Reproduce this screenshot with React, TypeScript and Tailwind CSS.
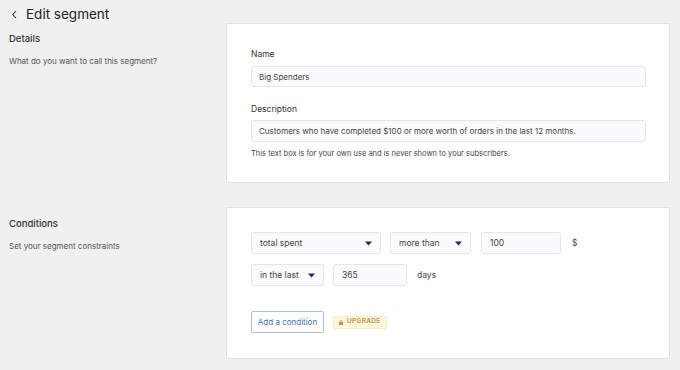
import React from "react";

const Arrow = () => (
  <svg width="7" height="5" viewBox="0 0 7 5" className="shrink-0">
    <path d="M0 0.5h7L3.5 4.5z" fill="#1f2a5c" />
  </svg>
);

const Select = ({ label, width }: { label: string; width: string }) => (
  <div
    className={`${width} h-[22px] flex items-center justify-between pl-[8px] pr-[8px] bg-[#fbfbfd] border border-[#e4e6ea] rounded-[3px] text-[8.5px] text-[#444]`}
  >
    <span>{label}</span>
    <Arrow />
  </div>
);

const Field = ({ value, width }: { value: string; width: string }) => (
  <div
    className={`${width} h-[22px] flex items-center px-[8px] bg-[#fbfbfd] border border-[#e4e6ea] rounded-[3px] text-[8.5px] text-[#444]`}
  >
    {value}
  </div>
);

export default function App() {
  return (
    <div
      className="w-[680px] h-[370px] bg-[#f0f0f0] text-[#333] overflow-hidden"
      style={{ fontFamily: "Inter, 'Noto Sans', sans-serif" }}
    >
      <div className="h-[23px] flex items-center pl-[11px] gap-[8px] pt-[6px]">
        <svg width="7" height="9" viewBox="0 0 7 9">
          <path d="M5 1L1.8 4.5L5 8" stroke="#333" strokeWidth="1.1" fill="none" />
        </svg>
        <span className="text-[13.5px] text-[#222] leading-none">Edit segment</span>
      </div>

      <div className="flex">
        <div className="w-[226px] pl-[9px] pt-[10px]">
          <div className="text-[9.5px] font-medium text-[#333] leading-[12px]">Details</div>
          <div className="text-[8px] text-[#555] mt-[10px] leading-[12px]">
            What do you want to call this segment?
          </div>
        </div>
        <div className="w-[444px] bg-white border border-[#e2e2e2] pl-[24px] pr-[23px] pt-[24px] pb-[22px]">
          <div className="text-[8.5px] text-[#333] leading-[12px]">Name</div>
          <div className="mt-[6px] h-[21px] flex items-center px-[7px] bg-[#fbfbfd] border border-[#e4e6ea] rounded-[3px] text-[8px] text-[#444]">
            Big Spenders
          </div>
          <div className="mt-[16px] text-[8.5px] text-[#333] leading-[12px]">Description</div>
          <div className="mt-[5px] h-[22px] flex items-center px-[7px] bg-[#fbfbfd] border border-[#e4e6ea] rounded-[3px] text-[8px] text-[#444]">
            Customers who have completed $100 or more worth of orders in the last 12 months.
          </div>
          <div className="mt-[6px] text-[7.5px] text-[#444] leading-[12px]">
            This text box is for your own use and is never shown to your subscribers.
          </div>
        </div>
      </div>

      <div className="flex mt-[24px]">
        <div className="w-[226px] pl-[9px] pt-[11px]">
          <div className="text-[9.5px] font-medium text-[#333] leading-[12px]">Conditions</div>
          <div className="text-[8px] text-[#555] mt-[10px] leading-[12px]">
            Set your segment constraints
          </div>
        </div>
        <div className="w-[444px] h-[152px] bg-white border border-[#e2e2e2] pl-[24px] pt-[24px]">
          <div className="flex items-center">
            <Select label="total spent" width="w-[130px]" />
            <div className="ml-[9px]">
              <Select label="more than" width="w-[81px]" />
            </div>
            <div className="ml-[10px]">
              <Field value="100" width="w-[80px]" />
            </div>
            <span className="ml-[11px] text-[8.5px] text-[#444]">$</span>
          </div>
          <div className="flex items-center mt-[10px]">
            <Select label="in the last" width="w-[73px]" />
            <div className="ml-[9px]">
              <Field value="365" width="w-[74px]" />
            </div>
            <span className="ml-[10px] text-[8.5px] text-[#444]">days</span>
          </div>
          <div className="flex items-center mt-[25px]">
            <div className="w-[73px] h-[22px] flex items-center justify-center border border-[#a8bfe0] rounded-[2px] text-[8px] text-[#3b6fb6]">
              Add a condition
            </div>
            <div className="ml-[9px] h-[13px] px-[5px] flex items-center gap-[4px] bg-[#fdf6dc] border border-[#f7ecc6] rounded-[2px] text-[6.5px] font-semibold tracking-[0.3px] text-[#c39445]">
              <svg width="4" height="5" viewBox="0 0 4 5">
                <rect x="0" y="2" width="4" height="3" fill="#c39445" />
                <path d="M1 2V1.3a1 1 0 0 1 2 0V2" stroke="#c39445" strokeWidth="0.7" fill="none" />
              </svg>
              UPGRADE
            </div>
          </div>
        </div>
      </div>
    </div>
  );
}
